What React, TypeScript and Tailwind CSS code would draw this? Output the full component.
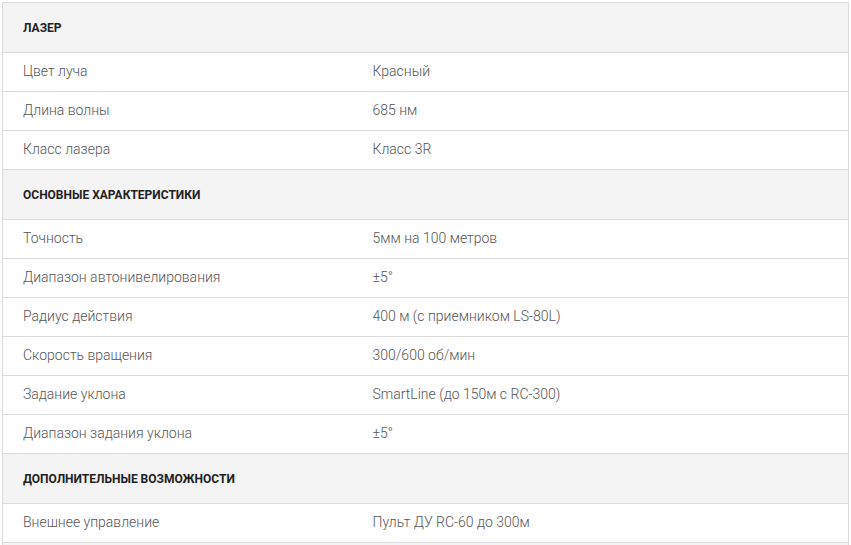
import React from 'react';

type Row = { label: string; value: string };
type Section = { title: string; rows: Row[] };

const sections: Section[] = [
  {
    title: 'Лазер',
    rows: [
      { label: 'Цвет луча', value: 'Красный' },
      { label: 'Длина волны', value: '685 нм' },
      { label: 'Класс лазера', value: 'Класс 3R' },
    ],
  },
  {
    title: 'Основные характеристики',
    rows: [
      { label: 'Точность', value: '5мм на 100 метров' },
      { label: 'Диапазон автонивелирования', value: '±5°' },
      { label: 'Радиус действия', value: '400 м (с приемником LS-80L)' },
      { label: 'Скорость вращения', value: '300/600 об/мин' },
      { label: 'Задание уклона', value: 'SmartLine (до 150м с RC-300)' },
      { label: 'Диапазон задания уклона', value: '±5°' },
    ],
  },
  {
    title: 'Дополнительные возможности',
    rows: [{ label: 'Внешнее управление', value: 'Пульт ДУ RC-60 до 300м' }],
  },
];

const App: React.FC = () => {
  return (
    <div className="bg-white p-[2px] w-[851px] h-[545px] overflow-hidden" style={{ fontFamily: 'Roboto, "Liberation Sans", sans-serif' }}>
      <table className="w-[847px] border-collapse border border-[#dcdcdc] table-fixed">
        <colgroup>
          <col className="w-[350px]" />
          <col />
        </colgroup>
        <tbody>
          {sections.map((section) => (
            <React.Fragment key={section.title}>
              {/* Section header */}
              <tr className="bg-[#f4f4f4] h-[50px]">
                <td colSpan={2} className="border border-[#dcdcdc] pl-[20px] text-[12px] font-bold uppercase text-[#222]">
                  {section.title}
                </td>
              </tr>
              {section.rows.map((row) => (
                <tr key={row.label} className="h-[39px]">
                  <td className="border-y border-[#dcdcdc] pl-[20px] pb-[1px] text-[14px] font-light text-[#555]">{row.label}</td>
                  <td className="border-y border-[#dcdcdc] pl-[20px] pb-[1px] text-[14px] font-light text-[#555]">{row.value}</td>
                </tr>
              ))}
            </React.Fragment>
          ))}
          {/* next section, cut off by the viewport */}
          <tr className="bg-[#f4f4f4] h-[50px]">
            <td colSpan={2} className="border border-[#dcdcdc]" />
          </tr>
        </tbody>
      </table>
    </div>
  );
};

export default App;
